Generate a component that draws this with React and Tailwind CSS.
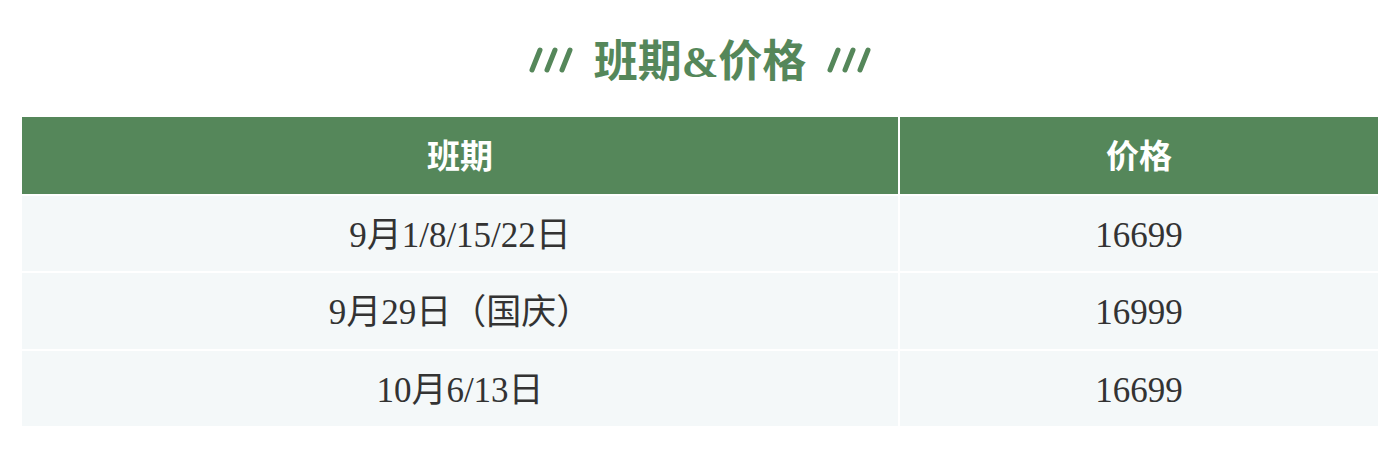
import React from 'react';

const ROWS = [
  { date: '9月1/8/15/22日', price: '16699', h: 'h-[75px]' },
  { date: '9月29日（国庆）', price: '16999', h: 'h-[76px]' },
  { date: '10月6/13日', price: '16699', h: 'h-[75px]' },
];

// three slanted strokes beside the heading
function Slashes() {
  return (
    <svg width="46" height="30" viewBox="0 0 46 30" className="shrink-0">
      {[0, 15, 30].map((x) => (
        <line key={x} x1={x + 4} y1="25" x2={x + 12} y2="5" stroke="#55875a" strokeWidth="5" strokeLinecap="round" />
      ))}
    </svg>
  );
}

const cell = 'bg-[#f4f8f9] flex items-center justify-center pt-[5px] text-[35px] text-[#333333]';
const head = "h-[77px] bg-[#55875a] flex items-center justify-center pb-[2px] text-white text-[33px] font-bold font-['Noto_Sans_CJK_SC',sans-serif]";

export default function App() {
  return (
    <div className="w-[1392px] h-[456px] bg-white pl-[22px] pr-[14px] font-['Liberation_Serif','Noto_Sans_CJK_SC',serif]">
      <div className="h-[117px] flex items-center justify-center gap-[20px] pt-[3px]">
        <Slashes />
        <h2 className="text-[44px] font-bold text-[#55875a] leading-none font-['Noto_Sans_CJK_SC',sans-serif]">
          班期<span className="font-['Liberation_Serif',serif]">&amp;</span>价格
        </h2>
        <Slashes />
      </div>

      <div className="grid grid-cols-[876px_1fr] gap-[2px]">
        <div className={head}>班期</div>
        <div className={head}>价格</div>
        {ROWS.map((r) => (
          <React.Fragment key={r.date}>
            <div className={`${r.h} ${cell}`}>{r.date}</div>
            <div className={`${r.h} ${cell}`}>{r.price}</div>
          </React.Fragment>
        ))}
      </div>
    </div>
  );
}
